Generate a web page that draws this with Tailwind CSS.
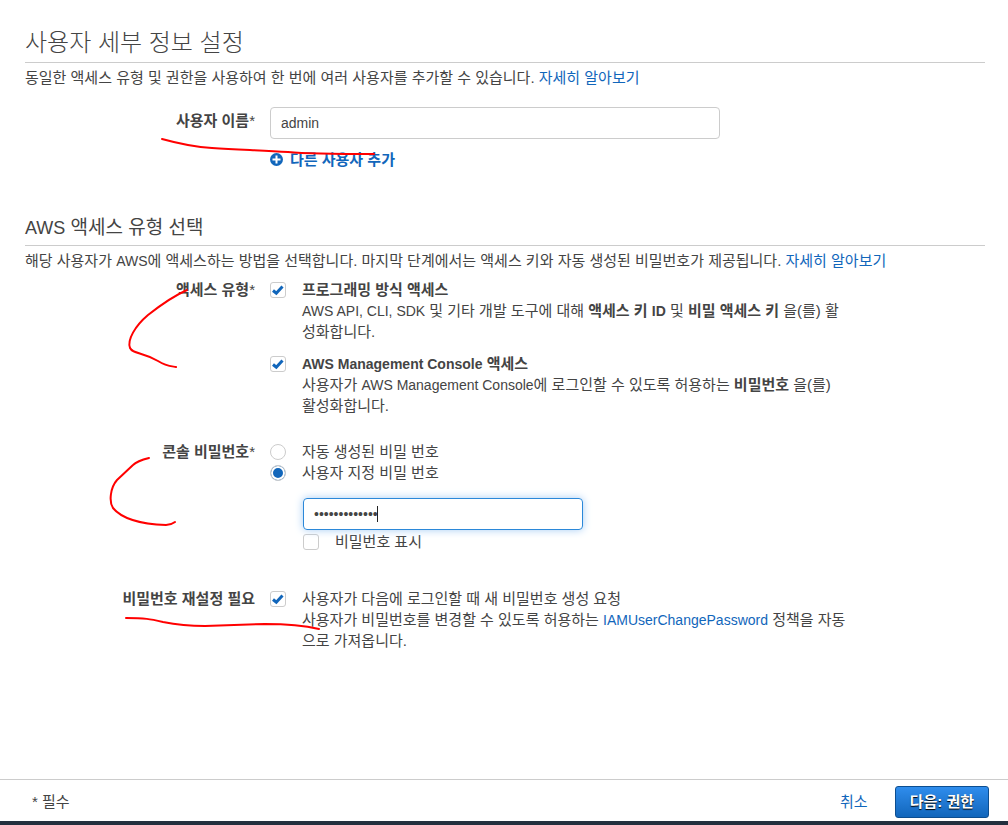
<!DOCTYPE html>
<html lang="ko">
<head>
    <meta charset="UTF-8">
    <meta name="viewport" content="width=device-width, initial-scale=1.0">
    <title>사용자 추가</title>
    <script src="https://cdn.jsdelivr.net/npm/@tailwindcss/browser@4"></script>
</head>
<body class="relative flex min-h-screen flex-col bg-white font-['Liberation_Sans','Noto_Sans_CJK_KR',sans-serif] text-[15px] leading-[21px] text-[#444]">
    <main class="grow pt-6 pr-[23px] pl-[25px]">
        <!-- User details -->
        <section>
            <h1 class="border-b border-[#ccc] text-2xl leading-[38px] font-light">사용자 세부 정보 설정</h1>
            <p class="mt-1">동일한 액세스 유형 및 권한을 사용하여 한 번에 여러 사용자를 추가할 수 있습니다. <a href="#" class="text-[#1166bb]">자세히 알아보기</a></p>

            <div class="mt-[19px] grid grid-cols-[230px_1fr] gap-x-[15px]">
                <label for="userName" class="pt-[3px] text-right font-bold">사용자 이름<span class="font-normal">*</span></label>
                <div>
                    <input id="userName" type="text" value="admin" class="block h-8 w-full max-w-[450px] rounded border border-[#ccc] px-2.5 text-sm outline-none">
                    <button type="button" class="mt-[10px] flex items-center gap-[7px] font-bold text-[#1166bb]">
                        <svg class="size-[13px]" viewBox="0 0 13 13">
                            <circle cx="6.5" cy="6.5" r="6.5" fill="#1166bb"/>
                            <path d="M6.5 2.5v8M2.5 6.5h8" stroke="#fff" stroke-width="2"/>
                        </svg>
                        다른 사용자 추가
                    </button>
                </div>
            </div>
        </section>

        <!-- Access type -->
        <section class="mt-[43px]">
            <h2 class="border-b border-[#ccc] pb-0.5 text-[19px] leading-[30px]"><span class="text-lg leading-none">AWS</span> 액세스 유형 선택</h2>
            <p class="mt-1">해당 사용자가 <span class="text-sm leading-none">AWS</span>에 액세스하는 방법을 선택합니다. 마지막 단계에서는 액세스 키와 자동 생성된 비밀번호가 제공됩니다. <a href="#" class="text-[#1166bb]">자세히 알아보기</a></p>

            <div class="mt-2 grid grid-cols-[230px_1fr] gap-x-[15px]">
                <div class="text-right font-bold">액세스 유형<span class="font-normal">*</span></div>
                <div class="flex flex-col gap-[11px]">
                    <div class="flex gap-4">
                        <span class="relative mt-[3px] size-4 shrink-0">
                            <input id="programmatic" type="checkbox" checked class="peer block size-4 appearance-none rounded-[3px] border border-[#ccc] bg-white">
                            <svg class="pointer-events-none absolute inset-0 hidden size-4 peer-checked:block" viewBox="0 0 16 16"><path d="M3 8.5L6.3 11.2L12.5 4.5" fill="none" stroke="#1166bb" stroke-width="3"/></svg>
                        </span>
                        <label for="programmatic">
                            <b>프로그래밍 방식 액세스</b><br>
                            <span class="text-sm leading-none">AWS API, CLI, SDK</span> 및 기타 개발 도구에 대해 <b>액세스 키 <span class="text-sm leading-none">ID</span></b> 및 <b>비밀 액세스 키</b> 을(를) 활<br>
                            성화합니다.
                        </label>
                    </div>
                    <div class="flex gap-4">
                        <span class="relative mt-[3px] size-4 shrink-0">
                            <input id="console" type="checkbox" checked class="peer block size-4 appearance-none rounded-[3px] border border-[#ccc] bg-white">
                            <svg class="pointer-events-none absolute inset-0 hidden size-4 peer-checked:block" viewBox="0 0 16 16"><path d="M3 8.5L6.3 11.2L12.5 4.5" fill="none" stroke="#1166bb" stroke-width="3"/></svg>
                        </span>
                        <label for="console">
                            <b><span class="text-sm leading-none">AWS Management Console</span> 액세스</b><br>
                            사용자가 <span class="text-sm leading-none">AWS Management Console</span>에 로그인할 수 있도록 허용하는 <b>비밀번호</b> 을(를)<br>
                            활성화합니다.
                        </label>
                    </div>
                </div>
            </div>

            <!-- Console password -->
            <div class="mt-[25px] grid grid-cols-[230px_1fr] gap-x-[15px]">
                <div class="text-right font-bold">콘솔 비밀번호<span class="font-normal">*</span></div>
                <div>
                    <div class="flex gap-4">
                        <input id="autoPw" name="pw" type="radio" class="mt-[3px] size-4 shrink-0 appearance-none rounded-full border border-[#ccc] checked:bg-[#1166bb] checked:shadow-[inset_0_0_0_2px_#fff]">
                        <label for="autoPw">자동 생성된 비밀 번호</label>
                    </div>
                    <div class="flex gap-4">
                        <input id="customPw" name="pw" type="radio" checked class="mt-[3px] size-4 shrink-0 appearance-none rounded-full border border-[#ccc] checked:bg-[#1166bb] checked:shadow-[inset_0_0_0_2px_#fff]">
                        <label for="customPw">사용자 지정 비밀 번호</label>
                    </div>
                    <div class="mt-[15px] ml-[33px]">
                        <div class="relative max-w-[280px]">
                            <input id="password" type="password" value="abcdefghijklm" aria-label="사용자 지정 비밀 번호" class="block h-8 w-full rounded border border-[#2b88d9] px-2.5 text-sm shadow-[0_0_8px_#a6cdf5] outline-none">
                            <span class="absolute top-2 left-[74px] h-4 w-px bg-[#222]"></span>
                        </div>
                        <div class="mt-[1px] flex gap-4">
                            <input id="showPw" type="checkbox" class="mt-[3px] size-4 shrink-0 appearance-none rounded-[3px] border border-[#ccc] checked:bg-[#1166bb]">
                            <label for="showPw">비밀번호 표시</label>
                        </div>
                    </div>
                </div>
            </div>

            <!-- Password reset -->
            <div class="mt-9 grid grid-cols-[230px_1fr] gap-x-[15px]">
                <div class="text-right font-bold">비밀번호 재설정 필요</div>
                <div class="flex gap-4">
                    <span class="relative mt-[3px] size-4 shrink-0">
                        <input id="reset" type="checkbox" checked class="peer block size-4 appearance-none rounded-[3px] border border-[#ccc] bg-white">
                        <svg class="pointer-events-none absolute inset-0 hidden size-4 peer-checked:block" viewBox="0 0 16 16"><path d="M3 8.5L6.3 11.2L12.5 4.5" fill="none" stroke="#1166bb" stroke-width="3"/></svg>
                    </span>
                    <div>
                        <label for="reset">사용자가 다음에 로그인할 때 새 비밀번호 생성 요청</label><br>
                        사용자가 비밀번호를 변경할 수 있도록 허용하는 <a href="#" class="text-sm leading-none text-[#1166bb]">IAMUserChangePassword</a> 정책을 자동<br>
                        으로 가져옵니다.
                    </div>
                </div>
            </div>
        </section>
    </main>

    <footer class="flex h-[46px] items-center border-t border-b-4 border-t-[#ccc] border-b-[#232f3e] pt-0.5 pr-[19px] pl-8">
        <span class="grow">* 필수</span>
        <a href="#" class="mr-[27px] text-[#1166bb]">취소</a>
        <button type="button" class="h-8 rounded-[3px] border border-[#0d4e90] bg-linear-to-b from-[#2f8ded] to-[#1166bb] px-[14px] font-bold text-white text-shadow-[0_1px_1px_#000]">다음: 권한</button>
    </footer>

    <!-- Pen marks -->
    <svg class="pointer-events-none absolute top-0 left-0" width="400" height="640" fill="none" stroke="#f00" stroke-width="2" stroke-linecap="round" stroke-linejoin="round">
        <path d="M162 139C180 144 194 147 212 148C240 150 262 150 288 152C310 154 335 154 374 154"/>
        <path d="M187 290C178 294 162 304 148 315C135 326 127 340 130 348C133 354 142 352 158 361C166 366 170 366 176 367"/>
        <path d="M149 458Q137 461 133 465L117 480C110 488 109 502 113 508C122 519 141 524 166 525Q171 525 175 522"/>
        <path d="M126 618C145 618 150 619 163 622C178 625 188 626 205 626L265 624C288 624 302 625 319 629"/>
    </svg>
</body>
</html>
